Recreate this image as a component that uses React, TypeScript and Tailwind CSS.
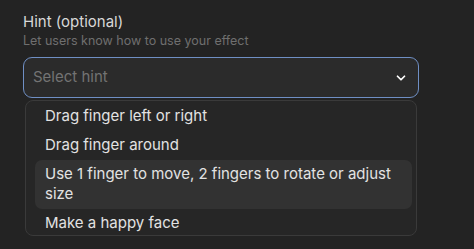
import React from 'react'
import { ChevronDown } from 'lucide-react'

const hints = [
  'Drag finger left or right',
  'Drag finger around',
  'Use 1 finger to move, 2 fingers to rotate or adjust size',
  'Make a happy face',
]

export default function App() {
  return (
    <div className="w-[474px] h-[249px] overflow-hidden bg-[#232323] pl-[23px] pt-[13px] font-['Inter',sans-serif]">
      <div className="w-[396px]">
        <div className="text-[15px] leading-[18px] text-[#d8d8d8]">Hint (optional)</div>
        <div className="mt-[2px] text-[12.5px] leading-[16px] text-[#6f6f6f]">Let users know how to use your effect</div>

        {/* Select trigger */}
        <div className="mt-[8px] h-[41px] flex items-center justify-between rounded-[9px] border-[1.5px] border-[#6f8fc4] bg-[#2b2b2b] pl-[9px] pr-[10px]">
          <span className="text-[15px] text-[#737373]">Select hint</span>
          <ChevronDown className="w-[14px] h-[14px] text-white" strokeWidth={3} />
        </div>

        {/* Menu */}
        <div className="mx-[2px] mt-[2px] h-[136px] overflow-hidden rounded-[8px] border border-[#3a3a3a] bg-[#262626] pl-[9px] pr-[4px] pt-[0.5px]">
          {hints.map((hint, i) => (
            <div
              key={i}
              className={`rounded-[7px] px-[10px] py-[4.5px] text-[15px] leading-[20px] text-[#e2e2e2] ${i === 2 ? 'bg-[#323232]' : ''}`}
            >
              {hint}
            </div>
          ))}
        </div>
      </div>
    </div>
  )
}
